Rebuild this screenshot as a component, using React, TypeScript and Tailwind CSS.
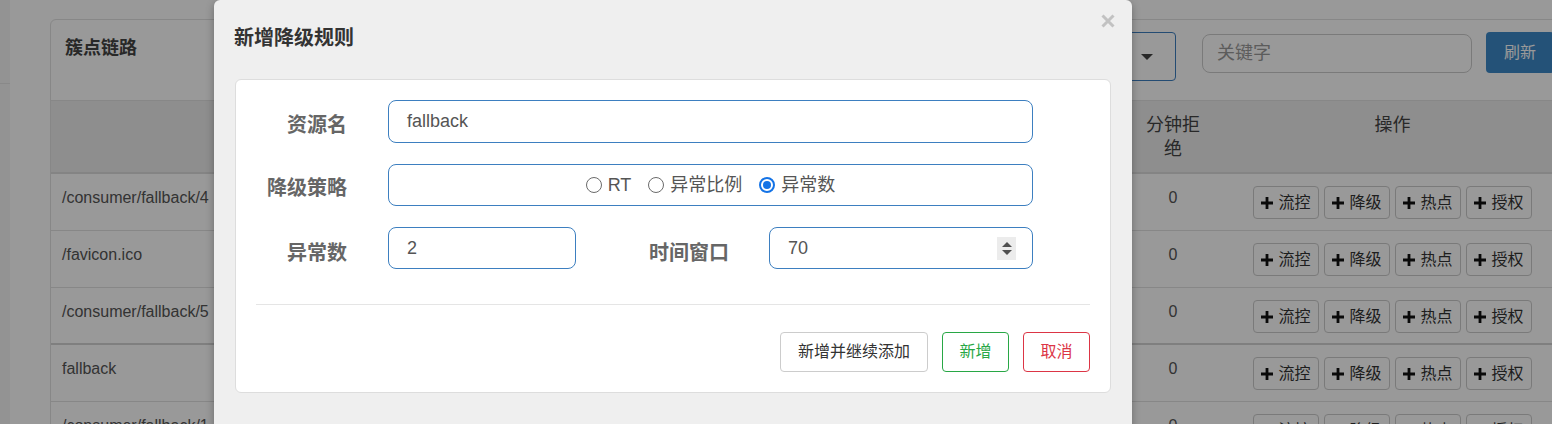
import React from "react";

const rows = [
  { name: "/consumer/fallback/4", thick: false },
  { name: "/favicon.ico", thick: false },
  { name: "/consumer/fallback/5", thick: true },
  { name: "fallback", thick: false },
  { name: "/consumer/fallback/1", thick: false },
];

const actions = ["流控", "降级", "热点", "授权"];

function PlusIcon() {
  return (
    <svg width="12" height="12" viewBox="0 0 12 12" className="shrink-0">
      <path d="M4.6 0h2.8v4.6H12v2.8H7.4V12H4.6V7.4H0V4.6h4.6z" fill="#111" />
    </svg>
  );
}

function Radio({ label, checked }: { label: string; checked?: boolean }) {
  return (
    <label className="flex items-center gap-[6px]">
      {checked ? (
        <span className="flex h-[16px] w-[16px] items-center justify-center rounded-full border-2 border-[#1473e6]">
          <span className="h-[8px] w-[8px] rounded-full bg-[#1473e6]" />
        </span>
      ) : (
        <span className="h-[16px] w-[16px] rounded-full border-[1.5px] border-[#6b6b6b] bg-white" />
      )}
      <span>{label}</span>
    </label>
  );
}

export default function App() {
  return (
    <div className="relative h-[424px] w-[1552px] overflow-hidden bg-white font-['Liberation_Sans','Noto_Sans_CJK_SC',sans-serif] text-[16px] text-[#555]">
      {/* page under the dialog */}
      <div className="flex">
        <aside className="h-[424px] w-[10px] shrink-0 bg-[#f6f6f6]">
          <div className="h-[84px] border-b border-[#e4e4e4]" />
        </aside>

        <div className="pl-[40px] pt-[19px]">
          <section className="w-[1528px] rounded-t-[6px] border border-[#e1e1e1]">
            <div className="flex h-[81px] items-start border-b border-[#e1e1e1] pl-[14px] pr-[23px]">
              <h2 className="pt-[15px] text-[18px] font-bold leading-[26px] text-[#444]">
                簇点链路
              </h2>
              <div className="ml-auto flex items-start gap-[14px] pt-[12px]">
                <div className="flex h-[49px] w-[220px] items-center justify-end rounded-[4px] border border-[#3d7fc0] pr-[22px]">
                  <span className="h-0 w-0 border-x-[6px] border-t-[6px] border-x-transparent border-t-[#444]" />
                </div>
                <div className="ml-[12px] mt-[2px] flex h-[39px] w-[270px] items-center rounded-[8px] border border-[#ccc] pl-[14px] text-[18px] text-[#999]">
                  关键字
                </div>
                <button className="h-[41px] w-[68px] rounded-[4px] bg-[#3d89c9] text-[16px] text-white">
                  刷新
                </button>
              </div>
            </div>

            <div className="grid grid-cols-[1fr_70px_369px] border-b-2 border-[#dcdcdc] bg-[#ededed] text-[18px] leading-[24px] text-[#444]">
              <div className="h-[71px]" />
              <div className="pt-[12px] text-center">
                分钟拒
                <br />绝
              </div>
              <div className="pt-[12px] text-center">操作</div>
            </div>

            {rows.map((row) => (
              <div
                key={row.name}
                className={`grid h-[57px] grid-cols-[1fr_70px_369px] border-b ${
                  row.thick ? "border-b-2 border-[#d4d4d4]" : "border-[#e1e1e1]"
                }`}
              >
                <div className="pl-[11px] pt-[13px] leading-[22px]">{row.name}</div>
                <div className="pt-[14px] text-center leading-[20px]">0</div>
                <div className="flex justify-center gap-[5px] pt-[12px]">
                  {actions.map((a) => (
                    <button
                      key={a}
                      className="flex h-[33px] w-[66px] items-center justify-center gap-[5px] rounded-[4px] border border-[#ccc] bg-white text-[16px] text-[#333]"
                    >
                      <PlusIcon />
                      {a}
                    </button>
                  ))}
                </div>
              </div>
            ))}
          </section>
        </div>
      </div>

      {/* backdrop */}
      <div className="absolute inset-0 bg-black/40" />

      {/* dialog */}
      <div className="absolute left-[214px] top-0 h-[440px] w-[918px] rounded-t-[6px] bg-[#efefef] shadow-[0_3px_9px_rgba(0,0,0,0.3)]">
        <div className="relative px-[20px] pt-[24px]">
          <h3 className="text-[20px] font-bold leading-[28px] text-[#333]">新增降级规则</h3>
          <svg
            width="14"
            height="14"
            viewBox="0 0 14 14"
            className="absolute right-[17px] top-[14px]"
          >
            <path d="M1.5 1.5l11 11M12.5 1.5l-11 11" stroke="#c2c2c2" strokeWidth="3" />
          </svg>
        </div>

        <div className="mx-[21px] mt-[27px] rounded-[6px] border border-[#ddd] bg-white pb-[20px] pt-[20px]">
          <div className="flex">
            <label className="w-[111px] pt-[11px] text-right text-[20px] font-bold leading-[28px] text-[#666]">
              资源名
            </label>
            <div className="ml-[41px] flex h-[43px] w-[645px] items-center rounded-[8px] border border-[#3d7fc0] pl-[18px] text-[18px] text-[#555]">
              fallback
            </div>
          </div>

          <div className="mt-[21px] flex">
            <label className="w-[111px] pt-[10px] text-right text-[20px] font-bold leading-[28px] text-[#666]">
              降级策略
            </label>
            <div className="ml-[41px] flex h-[42px] w-[645px] items-center justify-center gap-[17px] rounded-[8px] border border-[#3d7fc0] text-[18px] text-[#555]">
              <Radio label="RT" />
              <Radio label="异常比例" />
              <Radio label="异常数" checked />
            </div>
          </div>

          <div className="mt-[21px] flex">
            <label className="w-[111px] pt-[12px] text-right text-[20px] font-bold leading-[28px] text-[#666]">
              异常数
            </label>
            <div className="ml-[41px] flex h-[42px] w-[188px] items-center rounded-[8px] border border-[#3d7fc0] pl-[18px] text-[18px] text-[#555]">
              2
            </div>
            <label className="w-[153px] pt-[12px] text-right text-[20px] font-bold leading-[28px] text-[#666]">
              时间窗口
            </label>
            <div className="ml-[40px] flex h-[42px] w-[264px] items-center rounded-[8px] border border-[#3d7fc0] pl-[18px] pr-[16px] text-[18px] text-[#555]">
              <span>70</span>
              <div className="ml-auto flex h-[23px] w-[19px] flex-col items-center justify-center gap-[3px] bg-[#ececec]">
                <span className="h-0 w-0 border-x-[5px] border-b-[5px] border-x-transparent border-b-[#505050]" />
                <span className="h-0 w-0 border-x-[5px] border-t-[5px] border-x-transparent border-t-[#505050]" />
              </div>
            </div>
          </div>

          <div className="mx-[20px] mt-[35px] border-t border-[#e5e5e5]" />

          <div className="mt-[27px] flex justify-end gap-[14px] pr-[20px] text-[16px]">
            <button className="h-[40px] w-[148px] rounded-[4px] border border-[#ccc] bg-white text-[#333]">
              新增并继续添加
            </button>
            <button className="h-[40px] w-[67px] rounded-[4px] border border-[#28a745] bg-white text-[#28a745]">
              新增
            </button>
            <button className="h-[40px] w-[67px] rounded-[4px] border border-[#dc3545] bg-white text-[#dc3545]">
              取消
            </button>
          </div>
        </div>
      </div>
    </div>
  );
}
